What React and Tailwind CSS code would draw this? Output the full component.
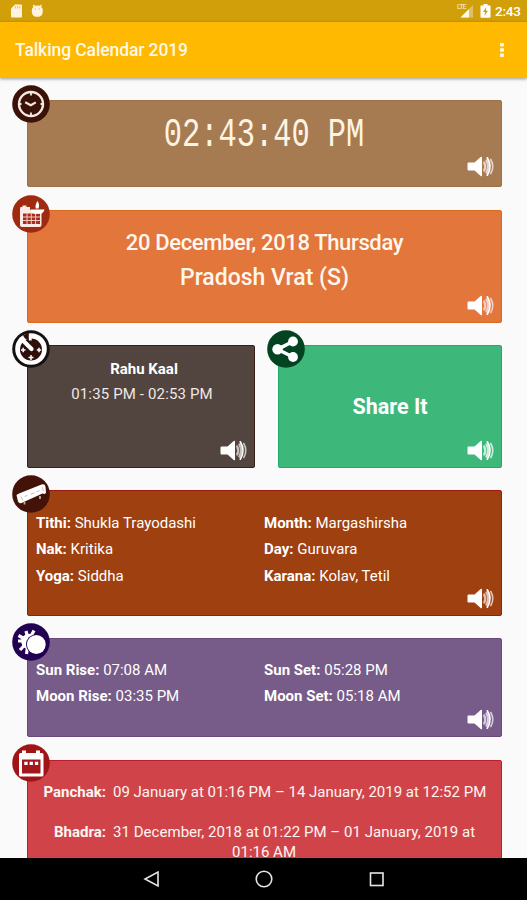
import React from "react";

function Speaker({ className = "bottom-[6px]", tint = "#e9d3d0" }) {
  return (
    <svg className={`absolute right-[7px] ${className}`} width="28" height="21" viewBox="0 0 28 21">
      <path d="M2.500 6.500H8.500L15 .8c.5-.4 1 0 1 .5v18.400c0 .5-.5.9-1 .5L8.500 14.500H2.500Q1.500 14.500 1.500 13.500v-6q0-1 1-1Z" fill="#fff" />
      <g fill="none" strokeLinecap="round">
        <path d="M18.200 6.500q2 4 0 8" stroke={tint} strokeWidth="2.200" />
        <path d="M20.500 4.500q3.200 6 0 12" stroke={tint} strokeWidth="2.400" />
        <path d="M21.300 1.800q5.400 8.700 0 17.400" stroke="#fff" strokeWidth="1.700" />
        <path d="M24.800 3.500q4 7 0 14" stroke={tint} strokeWidth="1.600" />
      </g>
    </svg>
  );
}

function Badge({ color, children, className = "-left-[16px] -top-[16px]" }) {
  return (
    <svg className={`absolute ${className}`} width="38" height="38" viewBox="0 0 38 38">
      <circle cx="19" cy="19" r="18.8" fill={color} />
      {children}
    </svg>
  );
}

function Card({ className, children }) {
  return <section className={`relative rounded-[2px] border ${className}`}>{children}</section>;
}

function Field({ label, value }) {
  return (
    <div className="whitespace-nowrap">
      <b className="font-bold">{label}</b> {value}
    </div>
  );
}

function StatusBar() {
  return (
    <header className="flex h-[22px] shrink-0 items-center bg-[#d19f09] pl-[11px] pr-[6px] text-white">
      <svg width="34" height="14" viewBox="0 0 34 14" fill="#fff3df">
        <path d="M4 .5h6q1 0 1 1v11q0 1-1 1H1q-1 0-1-1V4.500Z" />
        <path d="M4.600 2v2.500M6.700 2v2.500M8.800 2v2.500" stroke="#d9b04a" strokeWidth=".8" />
        <path d="M22.300 3 21.800.6l2.600 1.200q1.900-.6 3.800 0L30.800.6 30.300 3q1.500 1.300 1.500 3.500c0 4.300-1.500 6.300-5.500 6.300s-5.500-2-5.500-6.300q0-2.200 1.500-3.500Z" />
        <circle cx="24.300" cy="5" r=".6" fill="#d19f09" />
        <circle cx="28.300" cy="5" r=".6" fill="#d19f09" />
      </svg>
      <div className="ml-auto flex items-center">
        <div className="relative h-[14px] w-[17px]">
          <span className="absolute left-0 top-0 font-['Roboto'] text-[7px] font-medium leading-[7px] tracking-[-0.8px] text-[#f3e2b5]">LTE</span>
          <svg className="absolute inset-0" width="17" height="14" viewBox="0 0 17 14">
            <path d="M3.500 13.500 16 1v12.500Z" fill="#e0bf65" />
            <path d="M3.500 13.500 12 5v8.500Z" fill="#fff8e8" />
          </svg>
        </div>
        <svg className="ml-[6px]" width="11" height="14" viewBox="0 0 11 14">
          <path d="M3.500 0h4v1.500H10q.5 0 .5.5v11q0 .8-.8.8H1.300q-.8 0-.8-.8V2q0-.5.5-.5h2.500Z" fill="#fff" />
          <path d="M6.300 3 3 8h2l-.5 3.500L8 6.700H5.900Z" fill="#d19f09" />
        </svg>
        <span className="ml-[4px] w-[26px] text-[13.500px] font-medium leading-[22px] tracking-[-0.2px]">2:43</span>
      </div>
    </header>
  );
}

export default function App() {
  return (
    <div className="flex h-[900px] w-[527px] flex-col overflow-hidden bg-[#fafafa] font-['Roboto',sans-serif] text-white">
      <StatusBar />
      <div className="relative z-10 flex h-[56px] shrink-0 items-center justify-between bg-[#ffb900] pl-[15px] pr-[23px] shadow-[0_1px_3px_rgba(0,0,0,0.4)]">
        <h1 className="text-[17.5px] font-medium leading-6 tracking-[-0.1px] text-[#fff8e6]">Talking Calendar 2019</h1>
        <svg width="4" height="16" viewBox="0 0 4 16" fill="#fff8e6">
          <rect y="1" width="4" height="3.500" rx=".8" />
          <rect y="6.300" width="4" height="3.500" rx=".8" />
          <rect y="11.600" width="4" height="3.500" rx=".8" />
        </svg>
      </div>

      <main className="flex min-h-0 flex-1 flex-col overflow-hidden pl-[27px] pr-[25px] pt-[22px]">
        <Card className="mb-[23px] h-[87px] shrink-0 border-[#9d7147] bg-[#a67b52]">
          <Badge color="#3b1208">
            <circle cx="19" cy="19" r="12" fill="none" stroke="#f6e9e4" strokeWidth="2.400" />
            <path d="M19 6v4.500M19 27.500V32M6 19h3.500M28.500 19H32" stroke="#f6e9e4" strokeWidth="1.800" />
            <path d="m13.200 17.200 5.600 3 5-2.800" fill="none" stroke="#f6e9e4" strokeWidth="2.200" />
          </Badge>
          <div className="mt-[15px] flex justify-center">
            <time className="origin-center scale-x-[0.760] whitespace-pre font-['Liberation_Mono',monospace] text-[40px] leading-[40px] text-[#fff4e4]">02:43:40 PM</time>
          </div>
          <Speaker className="bottom-[9px]" />
        </Card>

        <Card className="mb-[22px] h-[113px] shrink-0 border-[#d9691f] bg-[#e2763b] text-center font-medium text-[#fff7ee]">
          <Badge color="#9e2a10">
            <path d="M8.500 12h2v-1.500h4V12h3.500v3h11.500v15q0 2-2 2H10q-2 0-2-2V14Z" fill="#fbeae6" />
            <path d="M11 18.500h17V29H11Z" fill="#a72c1c" />
            <path d="M11 22h17M11 25.500h17M15 18v11M19.300 18v11M23.600 18v11" stroke="#f0c9c1" strokeWidth="1" />
            <path d="M18.500 14.500h14q-1 4-4.500 4.300h-5.500q-3-.5-4-4.300Z" fill="#fff" />
            <path d="M25.500 6q2.500 3.500 1 7.500h-2.800Q22.800 10 25.500 6Z" fill="#fff" />
          </Badge>
          <p className="mt-[18px] text-[22px] leading-[28px] tracking-[-0.360px]">20 December, 2018 Thursday</p>
          <p className="mt-[7px] text-[23px] leading-[28px]">Pradosh Vrat (S)</p>
          <Speaker tint="#f4cfc9" />
        </Card>

        <div className="mb-[22px] flex h-[123px] shrink-0 gap-[23px]">
          <Card className="w-[228px] border-[#3b1f17] bg-[#52443f] text-center">
            <Badge color="#171010">
              <circle cx="19" cy="19" r="15.800" fill="#fff" />
              <circle cx="19" cy="19.500" r="11" fill="#2d100b" />
              <path d="M11 5.500 16.800 2.500V10L13 8.500Z" fill="#2d100b" />
              <path d="M9.500 9 19.500 19" stroke="#fff" strokeWidth="4.200" strokeLinecap="round" />
              <path d="M18.300 5.500V10.500" stroke="#fff" strokeWidth="2.800" />
              <path d="M19 25v5M16.500 27.500h5M9 20h4.500M11.200 17.800v4.400M27 17.800v4.400M24.800 20h4.400" stroke="#fff" strokeWidth="1.500" />
            </Badge>
            <p className="mt-[13px] pl-[6px] text-[15px] font-bold leading-[20px]">Rahu Kaal</p>
            <p className="mt-[5px] pl-[2px] text-[15px] leading-[20px] tracking-[0.140px] text-[#f1e7e4]">01:35 PM - 02:53 PM</p>
            <Speaker tint="#c9c3c1" />
          </Card>
          <Card className="flex-1 border-[#20aa6b] bg-[#3eb87a]">
            <Badge color="#034321" className="-left-[12px] -top-[16px]">
              <path d="M26 11.500 10.500 19.300 26 27" fill="none" stroke="#fff" strokeWidth="3.600" />
              <circle cx="26" cy="11.500" r="4.900" fill="#fff" />
              <circle cx="10.500" cy="19.300" r="5.200" fill="#fff" />
              <circle cx="26" cy="27" r="4.900" fill="#fff" />
            </Badge>
            <p className="flex h-full items-center justify-center pt-[1px] text-[21.500px] font-bold">Share It</p>
            <Speaker tint="#cdeedd" />
          </Card>
        </div>

        <Card className="mb-[22px] h-[126px] shrink-0 border-[#a01713] bg-[#9f4010] text-[15px] leading-[26.400px]">
          <Badge color="#431309">
            <path d="m4.500 20 2.500-1.500L29.500 9.500q3.500-1 4 2.200l.5 6.300-1.500 1-2-.6L9.500 28q-2.500.8-3.500-1.500Z" fill="#fff" />
            <path d="m9 21.500 2 4M30 12l1.500 4M12.500 21.500l3-1.200m3-1 4-1.500m2-1 3-1.200" stroke="#c6aaa4" strokeWidth=".8" />
            <path d="M12.500 27v2.500M28 21V24" stroke="#c6aaa4" strokeWidth="1.800" />
          </Badge>
          <div className="mt-[19px] grid grid-cols-[228px_1fr] pl-[8px]">
            <Field label="Tithi:" value="Shukla Trayodashi" />
            <Field label="Month:" value="Margashirsha" />
            <Field label="Nak:" value="Kritika" />
            <Field label="Day:" value="Guruvara" />
            <Field label="Yoga:" value="Siddha" />
            <Field label="Karana:" value="Kolav, Tetil" />
          </div>
          <Speaker tint="#dfc1b5" />
        </Card>

        <Card className="mb-[23px] h-[99px] shrink-0 border-[#674a79] bg-[#775b88] text-[15px] leading-[26.400px]">
          <Badge color="#220052" className="-left-[16px] -top-[16.500px]">
            <g stroke="#fff" strokeWidth="3.200">
              <path d="M16.500 18 14 8M16.500 18 22 7.500M16.500 18 6.500 12.500M16.500 18H6M16.500 18 8 27M16.500 18 14.500 31" />
            </g>
            <circle cx="17" cy="18.500" r="7.800" fill="#fff" />
            <circle cx="24.300" cy="21.500" r="10.300" fill="#220052" />
            <circle cx="24.300" cy="21.500" r="9.400" fill="#fff" />
          </Badge>
          <div className="mt-[18px] grid grid-cols-[228px_1fr] pl-[8px]">
            <Field label="Sun Rise:" value="07:08 AM" />
            <Field label="Sun Set:" value="05:28 PM" />
            <Field label="Moon Rise:" value="03:35 PM" />
            <Field label="Moon Set:" value="05:18 AM" />
          </div>
          <Speaker tint="#d8cde0" />
        </Card>

        <Card className="h-[130px] shrink-0 border-[#bd1d2b] bg-[#d04449] text-[15px] leading-[20px] text-[#fff4f2]">
          <Badge color="#a01418" className="-left-[16px] -top-[17px]">
            <path d="M10 9V6.500h4V9h10V6.500h4V9h2q1.500 0 1.500 1.500V31q0 1.500-1.500 1.500H8.500Q7 32.500 7 31V10.500Q7 9 8.500 9Z" fill="#fff" />
            <path d="M10 15.500h18.500V29.500H10Z" fill="#a3181c" />
            <path d="M12.300 17.800h3.300v3.300h-3.300Zm5.300 0h3.300v3.300h-3.300Zm5.300 0h3.300v3.300h-3.300Z" fill="#fff" />
          </Badge>
          <div className="mt-[21px] grid grid-cols-[78px_376px] gap-y-[20px]">
            <b className="text-right">Panchak:</b>
            <span className="whitespace-nowrap pl-[7px]">09 January at 01:16 PM – 14 January, 2019 at 12:52 PM</span>
            <b className="text-right">Bhadra:</b>
            <div className="whitespace-nowrap pl-[7px]">
              <span className="tracking-[0.040px]">31 December, 2018 at 01:22 PM – 01 January, 2019 at</span>
              <p className="w-[364px] pr-[62px] text-center">01:16 AM</p>
            </div>
          </div>
        </Card>
      </main>

      <nav className="flex h-[42px] shrink-0 items-center bg-black pl-[143px]">
        <svg width="242" height="20" viewBox="0 0 242 20" fill="none" stroke="#e6e6e6" strokeWidth="1.600">
          <path d="M15 3v14L2 10Z" />
          <circle cx="121" cy="10" r="7.800" />
          <rect x="227.500" y="4" width="12.500" height="12.500" />
        </svg>
      </nav>
    </div>
  );
}
